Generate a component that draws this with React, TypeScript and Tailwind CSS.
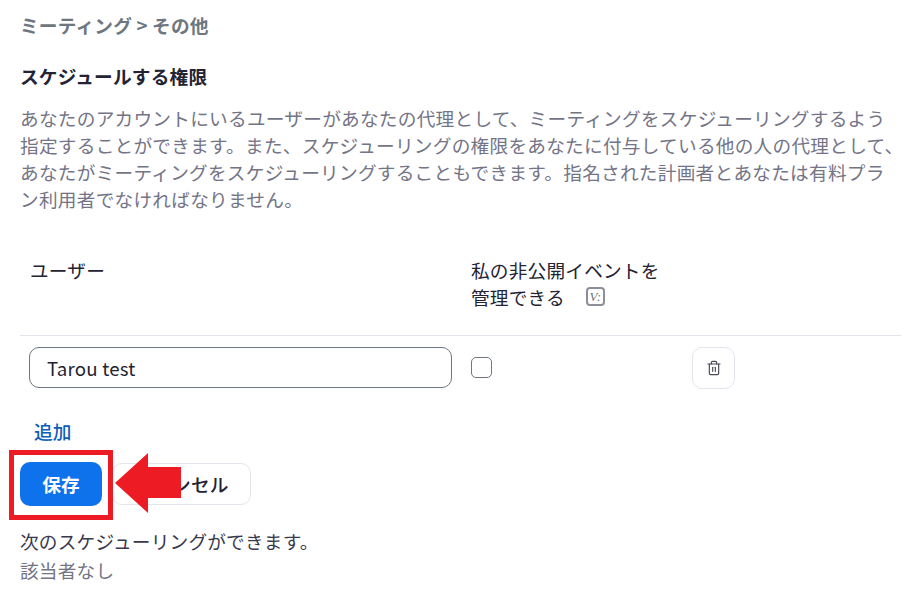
import { Trash2 } from 'lucide-react';

const font = { fontFamily: '"Noto Sans CJK JP", sans-serif' };

export default function App() {
  return (
    <div style={font} className="relative w-[916px] h-[592px] overflow-hidden bg-white px-5 text-[18.67px] tracking-[0.2px]">
      <div className="pt-[12px] h-[52px] leading-[26px] font-bold text-[#6e7680]">ミーティング &gt; その他</div>
      <h2 className="mt-[11px] leading-[26px] font-bold text-[#232333]">スケジュールする権限</h2>
      <p className="mt-[15px] whitespace-nowrap leading-[27px] tracking-[0.25px] text-[#747487]">
        あなたのアカウントにいるユーザーがあなたの代理として、ミーティングをスケジューリングするよう<br />
        指定することができます。また、スケジューリングの権限をあなたに付与している他の人の代理として、<br />
        あなたがミーティングをスケジューリングすることもできます。指名された計画者とあなたは有料プラ<br />
        ン利用者でなければなりません。
      </p>

      <div className="mt-[44px] flex h-[80px] w-[881px] border-b border-[#e4e4ed] leading-[27px] text-[#232333]">
        <div className="w-[451px] pl-[10px]">ユーザー</div>
        <div>
          <div>私の非公開イベントを</div>
          <div className="flex items-center">
            管理できる
            <span className="ml-[21px] flex h-[19px] w-[19px] items-center justify-center rounded-[4px] border-2 border-[#8a8f99] font-['Liberation_Serif',serif] text-[13px] italic leading-none text-[#6e7680]">V:</span>
          </div>
        </div>
      </div>

      <div className="mt-[11px] flex h-[42px] items-start">
        <div className="ml-[9px] flex h-[41px] w-[423px] items-center rounded-[10px] border border-[#6e7680] pl-[17px] text-[#232333]">Tarou test</div>
        <div className="ml-[19px] mt-[10px] h-[21px] w-[21px] rounded-[5px] border border-[#6e7680]"></div>
        <button className="ml-[200px] flex h-[42px] w-[43px] items-center justify-center rounded-[10px] border border-[#e4e4ed]">
          <Trash2 className="h-[16px] w-[16px] text-[#4a4a5a]" strokeWidth={1.75} />
        </button>
      </div>

      <div className="mt-[28px] pl-[14px] leading-[27px] font-medium text-[#0e5db8]">追加</div>

      <div className="mt-[18px] flex items-center">
        <button className="h-[44px] w-[82px] rounded-[10px] bg-[#0e72ed] font-bold text-white">保存</button>
        <button className="ml-[10px] h-[42px] w-[139px] rounded-[10px] border border-[#e4e4ed] font-medium text-[#232333]">キャンセル</button>
      </div>

      <div className="mt-[20px] leading-[30px] text-[#39394d]">次のスケジューリングができます。</div>
      <div className="mt-[-1px] leading-[30px] text-[#747487]">該当者なし</div>

      {/* annotation over the page */}
      <div className="absolute left-[9px] top-[450px] h-[70px] w-[104px] border-[5px] border-[#ed1c24]"></div>
      <svg className="absolute left-[115px] top-[453px]" width="66" height="60" viewBox="0 0 66 60">
        <polygon points="0,30 33,0 33,14 66,14 66,45 33,45 33,60" fill="#ed1c24" />
      </svg>
    </div>
  );
}
